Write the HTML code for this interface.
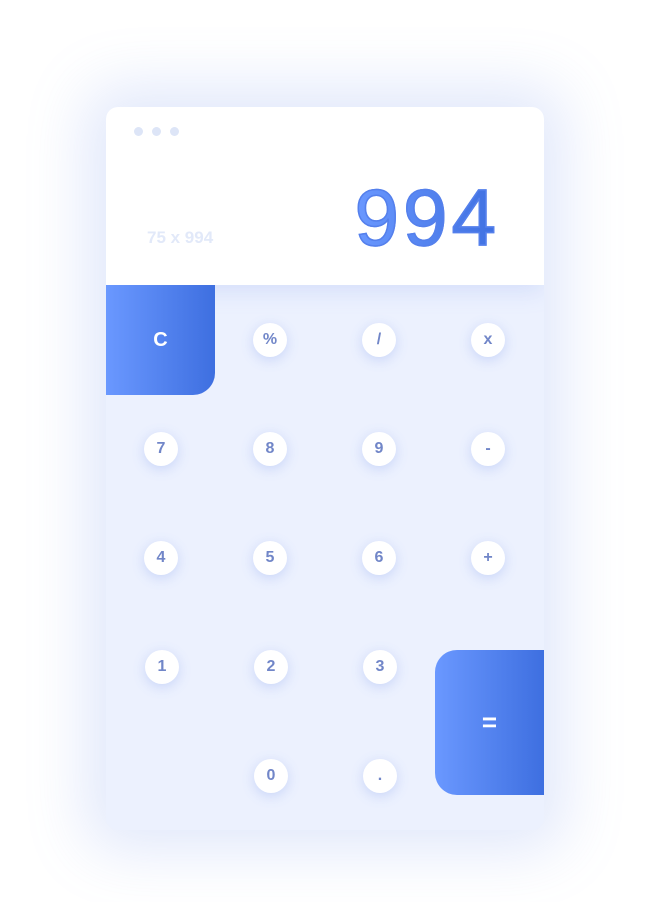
<!DOCTYPE html>
<html><head><style>
html,body{margin:0;padding:0;background:#fff;width:661px;height:902px;overflow:hidden;font-family:"Liberation Sans",sans-serif}
.card{position:absolute;left:106px;top:107px;width:438px;height:723px;border-radius:12px;background:#ecf1fe;box-shadow:0 0 60px 20px rgba(120,150,235,0.22);overflow:hidden}
.top{position:absolute;left:0;top:0;width:438px;height:178px;background:#fff;box-shadow:0 6px 22px rgba(120,150,235,0.2)}
.dot{position:absolute;top:20px;width:9px;height:9px;border-radius:50%;background:#dde5f7}
.big{position:absolute;right:44px;top:66px;font-size:80px;line-height:90px;color:#5a88f0;background:linear-gradient(90deg,#6a98ff,#3e6fe0);-webkit-background-clip:text;background-clip:text;-webkit-text-fill-color:transparent;letter-spacing:4px;-webkit-text-stroke:1.5px #5580ec}
.small{position:absolute;left:41px;top:121px;font-size:17px;font-weight:bold;color:#e2e9f9}
.b{position:absolute;width:34px;height:34px;border-radius:50%;background:#fff;box-shadow:0 3px 12px rgba(120,150,235,0.3);color:#7186c8;font-size:16px;font-weight:bold;text-align:center;line-height:34px}
.c{position:absolute;left:0;top:178px;width:109px;height:110px;border-bottom-right-radius:22px;background:linear-gradient(90deg,#6a98ff,#3e6fe0);color:#fff;font-size:20px;font-weight:bold;text-align:center;line-height:110px}
.eq{position:absolute;left:329px;top:543px;width:109px;height:145px;border-radius:22px 0 0 22px;background:linear-gradient(90deg,#6a98ff,#3e6fe0);color:#fff;font-size:26px;font-weight:bold;text-align:center;line-height:145px}
</style></head><body>
<div class="card">
<div class="top">
<div class="dot" style="left:28px"></div><div class="dot" style="left:46px"></div><div class="dot" style="left:64px"></div>
<div class="small">75 x 994</div>
<div class="big">994</div>
</div>
<div class="c">C</div>
<div class="b" style="left:147px;top:216px">%</div>
<div class="b" style="left:256px;top:216px">/</div>
<div class="b" style="left:365px;top:216px">x</div>
<div class="b" style="left:38px;top:325px">7</div>
<div class="b" style="left:147px;top:325px">8</div>
<div class="b" style="left:256px;top:325px">9</div>
<div class="b" style="left:365px;top:325px">-</div>
<div class="b" style="left:38px;top:434px">4</div>
<div class="b" style="left:147px;top:434px">5</div>
<div class="b" style="left:256px;top:434px">6</div>
<div class="b" style="left:365px;top:434px">+</div>
<div class="b" style="left:39px;top:543px">1</div>
<div class="b" style="left:148px;top:543px">2</div>
<div class="b" style="left:257px;top:543px">3</div>
<div class="b" style="left:148px;top:652px">0</div>
<div class="b" style="left:257px;top:652px">.</div>
<div class="eq">=</div>
</div>
</body></html>
